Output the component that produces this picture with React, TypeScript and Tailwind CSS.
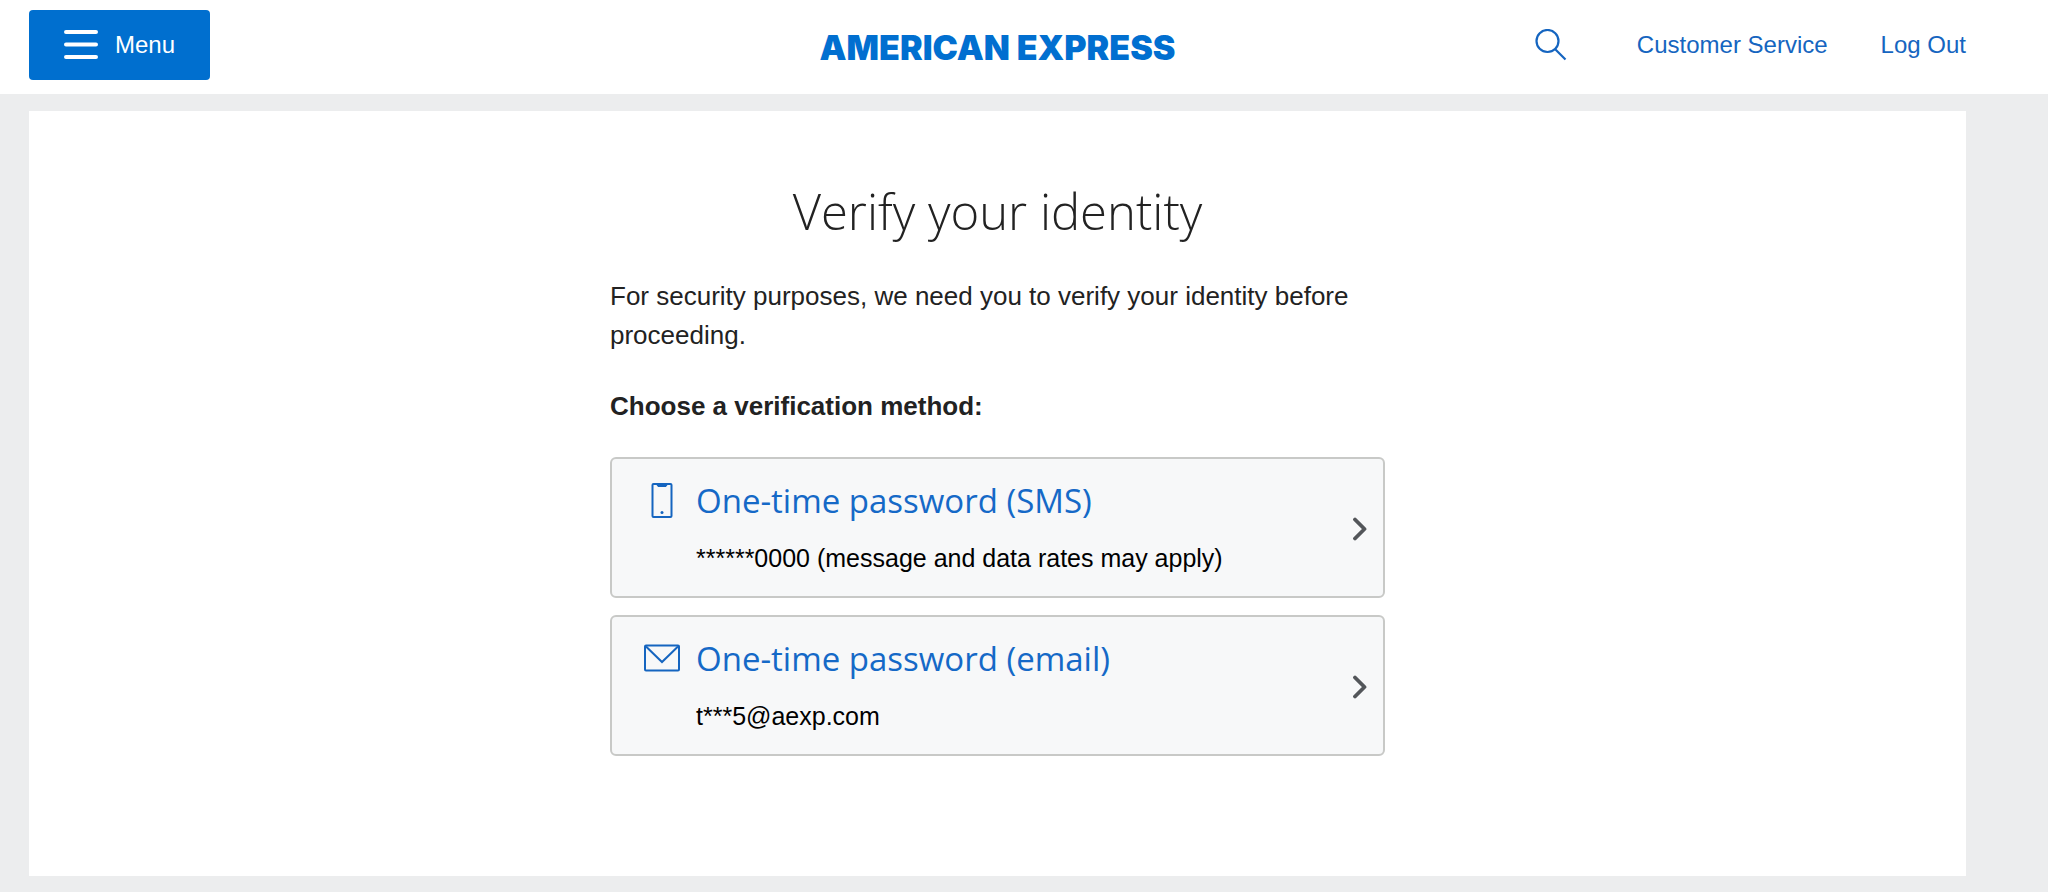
import type { ReactNode } from 'react';

type Method = {
  title: string;
  detail: string;
  icon: ReactNode;
};

function PhoneIcon() {
  return (
    <svg className="h-9 w-9" viewBox="0 0 36 36" fill="none" stroke="currentColor" strokeWidth="2" aria-hidden="true">
      <rect x="8.500" y="1" width="19" height="33" rx="1" />
      <path d="M13 2h10l-1 1.500h-8z" fill="currentColor" strokeWidth="1" />
      <circle cx="18" cy="29.500" r="1.500" fill="currentColor" stroke="none" />
    </svg>
  );
}

function MailIcon() {
  return (
    <svg className="h-9 w-9" viewBox="0 0 36 36" fill="none" stroke="currentColor" strokeWidth="2" aria-hidden="true">
      <rect x="1" y="4.500" width="34" height="25" rx="1" />
      <path d="M2 5.500L18 21 34 5.500" />
    </svg>
  );
}

const methods: Method[] = [
  {
    title: 'One-time password (SMS)',
    detail: '******0000 (message and data rates may apply)',
    icon: <PhoneIcon />,
  },
  {
    title: 'One-time password (email)',
    detail: 't***5@aexp.com',
    icon: <MailIcon />,
  },
];

function Header() {
  return (
    <header className="grid grid-cols-[1fr_auto_1fr] items-center bg-white pt-[10px] pr-[82px] pb-[14px] pl-[29px] text-[#1565c0]">
      <button type="button" className="flex h-[70px] w-[181px] items-center justify-self-start rounded bg-[#006fcf] pl-[35px] text-[24px] text-white">
        <svg className="mr-[17px] h-[30px] w-[34px]" viewBox="0 0 34 30" stroke="currentColor" strokeWidth="4" strokeLinecap="round" aria-hidden="true">
          <path d="M2 2h30M2 14.500h30M2 27h30" />
        </svg>
        Menu
      </button>
      <a href="#home" className="pt-[6px] font-['Inter',sans-serif] text-[34px] leading-9 font-black text-[#016fd0]">
        AMERICAN EXPRESS
      </a>
      <nav className="flex items-center justify-end text-[24px]">
        <button type="button" aria-label="Search" className="mr-[70px]">
          <svg className="h-8 w-8" viewBox="0 0 32 32" fill="none" stroke="currentColor" strokeWidth="2.200" aria-hidden="true">
            <circle cx="12.500" cy="12" r="11" />
            <path d="M20 20L30.500 30.500" />
          </svg>
        </button>
        <a href="#service" className="mr-[53px]">Customer Service</a>
        <a href="#logout">Log Out</a>
      </nav>
    </header>
  );
}

function MethodCard({ title, detail, icon }: Method) {
  return (
    <button type="button" className="flex w-full items-center rounded-md border-2 border-[#c8c9c7] bg-[#f7f8f9] pt-5 pr-4 pb-[18px] pl-8 text-left">
      <span className="grid flex-1 grid-cols-[36px_1fr] items-center gap-x-4 gap-y-4">
        <span className="text-[#1565c0]">{icon}</span>
        <span className="font-['Open_Sans',sans-serif] text-[33px] leading-[44px] text-[#1569c7]">{title}</span>
        <span className="col-start-2 text-[25px] leading-[39px] text-black">{detail}</span>
      </span>
      <svg className="h-6 w-[14px] text-[#53565a]" viewBox="0 0 14 24" fill="none" stroke="currentColor" strokeWidth="3.800" strokeLinecap="round" strokeLinejoin="round" aria-hidden="true">
        <path d="M2 2.500l9.500 9.500L2 21.500" />
      </svg>
    </button>
  );
}

export default function App() {
  return (
    <div className="flex min-h-screen flex-col bg-[#ecedee] font-['Liberation_Sans',Arial,sans-serif] text-[#222]">
      <Header />
      <main className="mt-[17px] mr-[82px] mb-4 ml-[29px] flex-1 bg-white pt-[66px] pb-[100px]">
        <div className="mx-auto max-w-[775px]">
          <h1 className="text-center font-['Open_Sans',sans-serif] text-[49px] leading-[68px] font-light">Verify your identity</h1>
          <p className="mt-8 text-[26px] leading-[39px]">
            For security purposes, we need you to verify your identity before proceeding.
          </p>
          <p className="my-8 text-[26px] leading-[38px] font-bold">Choose a verification method:</p>
          <div className="flex flex-col gap-[17px]">
            {methods.map((method) => (
              <MethodCard key={method.title} {...method} />
            ))}
          </div>
        </div>
      </main>
    </div>
  );
}
